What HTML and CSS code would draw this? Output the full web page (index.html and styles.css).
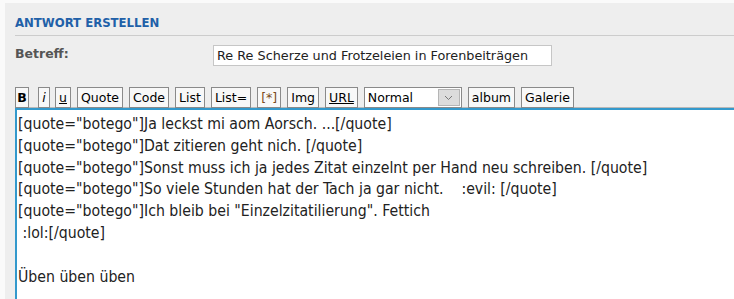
FILE: index.html
```html
<!DOCTYPE html>
<html lang="de">
<head>
    <meta charset="UTF-8">
    <title>Antwort erstellen</title>
    <link rel="stylesheet" href="styles.css">
</head>
<body>
    <div class="panel">
        <h2 class="title">ANTWORT ERSTELLEN</h2>

        <div class="subject-row">
            <label class="subject-label">Betreff:</label>
            <div class="subject-input">Re Re Scherze und Frotzeleien in Forenbeiträgen</div>
        </div>

        <div class="toolbar">
            <span class="btn btn-b">B</span>
            <span class="btn btn-i">i</span>
            <span class="btn btn-u btn-small">u</span>
            <span class="btn">Quote</span>
            <span class="btn">Code</span>
            <span class="btn">List</span>
            <span class="btn">List=</span>
            <span class="btn btn-star">[*]</span>
            <span class="btn">Img</span>
            <span class="btn btn-u">URL</span>
            <span class="select">
                <span class="select-text">Normal</span>
                <span class="select-arrow">
                    <svg width="9" height="6" viewBox="0 0 9 6"><path d="M1 1 L4.5 4.5 L8 1" fill="none" stroke="#777" stroke-width="1"/></svg>
                </span>
            </span>
            <span class="btn">album</span>
            <span class="btn">Galerie</span>
        </div>

        <div class="editor">[quote="botego"]Ja leckst mi aom Aorsch. ...[/quote]
[quote="botego"]Dat zitieren geht nich. [/quote]
[quote="botego"]Sonst muss ich ja jedes Zitat einzelnt per Hand neu schreiben. [/quote]
[quote="botego"]So viele Stunden hat der Tach ja gar nicht.    :evil: [/quote]
[quote="botego"]Ich bleib bei "Einzelzitatilierung". Fettich
 :lol:[/quote]

Üben üben üben</div>
    </div>
</body>
</html>
```

FILE: styles.css
```css
body {
    margin: 0;
    padding: 3px 0 0 5px;
    background: #fafafa;
    font-family: Tahoma, "DejaVu Sans Condensed", sans-serif;
    color: #000;
}
.panel {
    background: #eeeeee;
    padding-left: 10px;
    height: 296px;
    overflow: hidden;
}
.title {
    margin: 0;
    padding: 12px 0 5px 0;
    font-size: 13px;
    font-weight: bold;
    color: #2160a8;
    border-bottom: 1px solid #cccccc;
}
.subject-row {
    display: flex;
    align-items: flex-start;
    margin-top: 8px;
}
.subject-label {
    width: 198px;
    font-family: Verdana, "DejaVu Sans", sans-serif;
    font-size: 12.5px;
    font-weight: bold;
    color: #555;
    padding-top: 2px;
}
.subject-input {
    width: 334px;
    height: 19px;
    line-height: 19px;
    padding-left: 3px;
    margin-top: 1px;
    background: #fff;
    border: 1px solid #c6c6c6;
    font-family: Verdana, "DejaVu Sans", sans-serif;
    font-size: 12.8px;
    color: #222;
}
.toolbar {
    display: flex;
    gap: 6px;
    margin-top: 21px;
    height: 21px;
}
.btn {
    display: inline-block;
    height: 19px;
    line-height: 19px;
    padding: 0 3px;
    border: 1px solid #8a8a8a;
    background: #f8f8f8;
    font-family: Verdana, "DejaVu Sans", sans-serif;
    font-size: 12.5px;
    color: #000;
}
.btn-b {
    width: 12px;
    padding: 0;
    text-align: center;
    font-weight: bold;
    margin-right: 3px;
}
.btn-i {
    width: 10px;
    padding: 0;
    text-align: center;
    font-style: italic;
    margin-right: -1px;
}
.btn-small {
    width: 14px;
    padding: 0;
    text-align: center;
}
.btn-u {
    text-decoration: underline;
}
.btn-star {
    color: #7a4a1a;
}
.select {
    display: flex;
    width: 96px;
    height: 19px;
    border: 1px solid #8a8a8a;
    background: #fff;
    font-family: Verdana, "DejaVu Sans", sans-serif;
    font-size: 12.5px;
}
.select-text {
    flex: 1;
    line-height: 19px;
    padding-left: 3px;
}
.select-arrow {
    width: 20px;
    margin: 1px;
    background: #dcdcdc;
    border: 1px solid #b5b5b5;
    display: flex;
    align-items: center;
    justify-content: center;
}
.editor {
    background: #fff;
    border-top: 2px solid #3399cc;
    border-left: 2px solid #3399cc;
    box-shadow: 0 -1px 0 #b8b8b8;
    padding: 3px 0 0 1px;
    height: 200px;
    white-space: pre-wrap;
    font-size: 15.7px;
    line-height: 21.8px;
    color: #222;
}
```
